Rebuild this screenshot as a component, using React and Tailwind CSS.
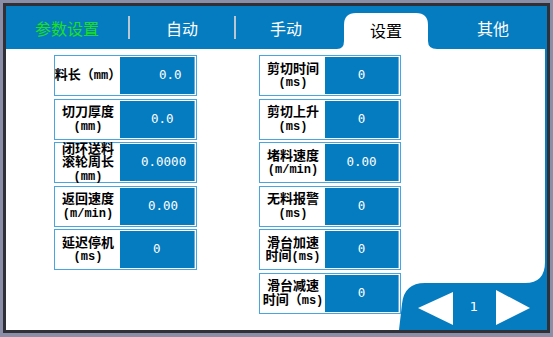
import React from 'react';

const cjk = { fontFamily: '"Noto Sans CJK SC", "Noto Sans", sans-serif' };
const mono = { fontFamily: '"Liberation Mono", "DejaVu Sans Mono", monospace' };
const digits = { fontFamily: '"DejaVu Sans Mono", "Liberation Mono", monospace' };

const leftRows = [
  { lines: ['料长（mm）'], value: '0.0', pad: 'pl-[39px]' },
  { lines: ['切刀厚度', '(mm)'], value: '0.0', pad: 'pl-[31px]' },
  { lines: ['闭环送料', '滚轮周长', '(mm)'], value: '0.0000', pad: 'pl-[21px]' },
  { lines: ['返回速度', '(m/min)'], value: '0.00', pad: 'pl-[28px]' },
  { lines: ['延迟停机', '(ms)'], value: '0', pad: 'pl-[33px]' },
];

const rightRows = [
  { lines: ['剪切时间', '(ms)'], value: '0' },
  { lines: ['剪切上升', '(ms)'], value: '0' },
  { lines: ['堵料速度', '(m/min)'], value: '0.00' },
  { lines: ['无料报警', '(ms)'], value: '0' },
  { lines: ['滑台加速', '时间(ms)'], value: '0' },
  { lines: ['滑台减速', '时间（ms)'], value: '0' },
];

// label line: CJK in sans, ascii units in mono
const Line = ({ text }) => {
  const parts = text.split(/([()a-z/]+)/).filter(Boolean);
  return (
    <div className="leading-[13.5px] whitespace-nowrap">
      {parts.map((p, i) =>
        /^[()a-z/]+$/.test(p) ? (
          <span key={i} style={mono} className="text-[12px] font-bold">{p}</span>
        ) : (
          <span key={i} style={cjk} className="text-[13px] font-semibold">{p}</span>
        )
      )}
    </div>
  );
};

const Field = ({ lines, value, pad, labelW }) => (
  <div className="h-[41px] flex border border-[#4aa5de] bg-white p-[1px]">
    <div className={`${labelW} flex flex-col items-center justify-center text-black`}>
      {lines.map((l, i) => <Line key={i} text={l} />)}
    </div>
    <div
      className={`flex-1 flex items-center bg-[#067cc0] border-r border-[#5fb2e6] text-white text-[12.5px] ${pad || 'justify-center'}`}
      style={digits}
    >
      {value}
    </div>
  </div>
);

const Tab = ({ label, w, active, green }) => (
  <div className={`${w} relative flex items-center justify-center`}>
    {active && (
      <svg className="absolute left-0 bottom-0" width="103" height="36" viewBox="0 0 103 36">
        <path d="M1,36 Q8,36 8,28 L8,12 Q8,0 20,0 L80,0 Q92,0 92,12 L92,28 Q92,36 101,36 Z" fill="#fff" />
      </svg>
    )}
    <span
      style={cjk}
      className={`relative text-[16px] ${active ? 'text-black mt-[5px] -ml-[3px]' : green ? 'text-[#1ce01c]' : 'text-white'}`}
    >
      {label}
    </span>
  </div>
);

const Sep = () => <div className="w-[2px] h-[23px] self-center bg-[#b9c7d2]" />;

export default function App() {
  return (
    <div className="w-[553px] h-[337px] bg-[#8a8ea6] pt-[3px] pl-[3px] pr-[3px] pb-[4px]">
      <div className="w-full h-full border-[3px] border-[#2f3038] flex flex-col">
        {/* tabs */}
        <div className="h-[43px] bg-[#067cc0] flex">
          <Tab label="参数设置" w="w-[122px]" green />
          <Sep />
          <Tab label="自动" w="w-[104px]" />
          <Sep />
          <Tab label="手动" w="w-[100px]" />
          <Tab label="设置" w="w-[103px]" active />
          <Tab label="其他" w="w-[108px]" />
        </div>

        {/* body */}
        <div className="flex-1 relative bg-white border-r-2 border-[#067cc0] pt-[6px] pl-[48px] flex">
          <div className="w-[143px] flex flex-col gap-[2.5px]">
            {leftRows.map((r, i) => (
              <Field key={i} {...r} labelW="w-[64px]" />
            ))}
          </div>
          <div className="w-[142px] ml-[62px] flex flex-col gap-[2.5px]">
            {rightRows.map((r, i) => (
              <Field key={i} {...r} labelW="w-[64px]" />
            ))}
          </div>

          {/* pager */}
          <svg className="absolute right-[-2px] bottom-0" width="152" height="72" viewBox="0 0 152 72">
            <path d="M4,72 L7,46 Q9,25 30,25 L130,25 Q150,25 150,4 L150,0 L152,0 L152,72 Z" fill="#067cc0" />
            <polygon points="23,50 58,34 58,67" fill="#fff" />
            <polygon points="101,32 101,67 135,50" fill="#fff" />
          </svg>
          <span
            className="absolute right-[67px] bottom-[14px] text-white text-[13px]"
            style={{ fontFamily: '"DejaVu Sans", sans-serif' }}
          >
            1
          </span>
        </div>
      </div>
    </div>
  );
}
